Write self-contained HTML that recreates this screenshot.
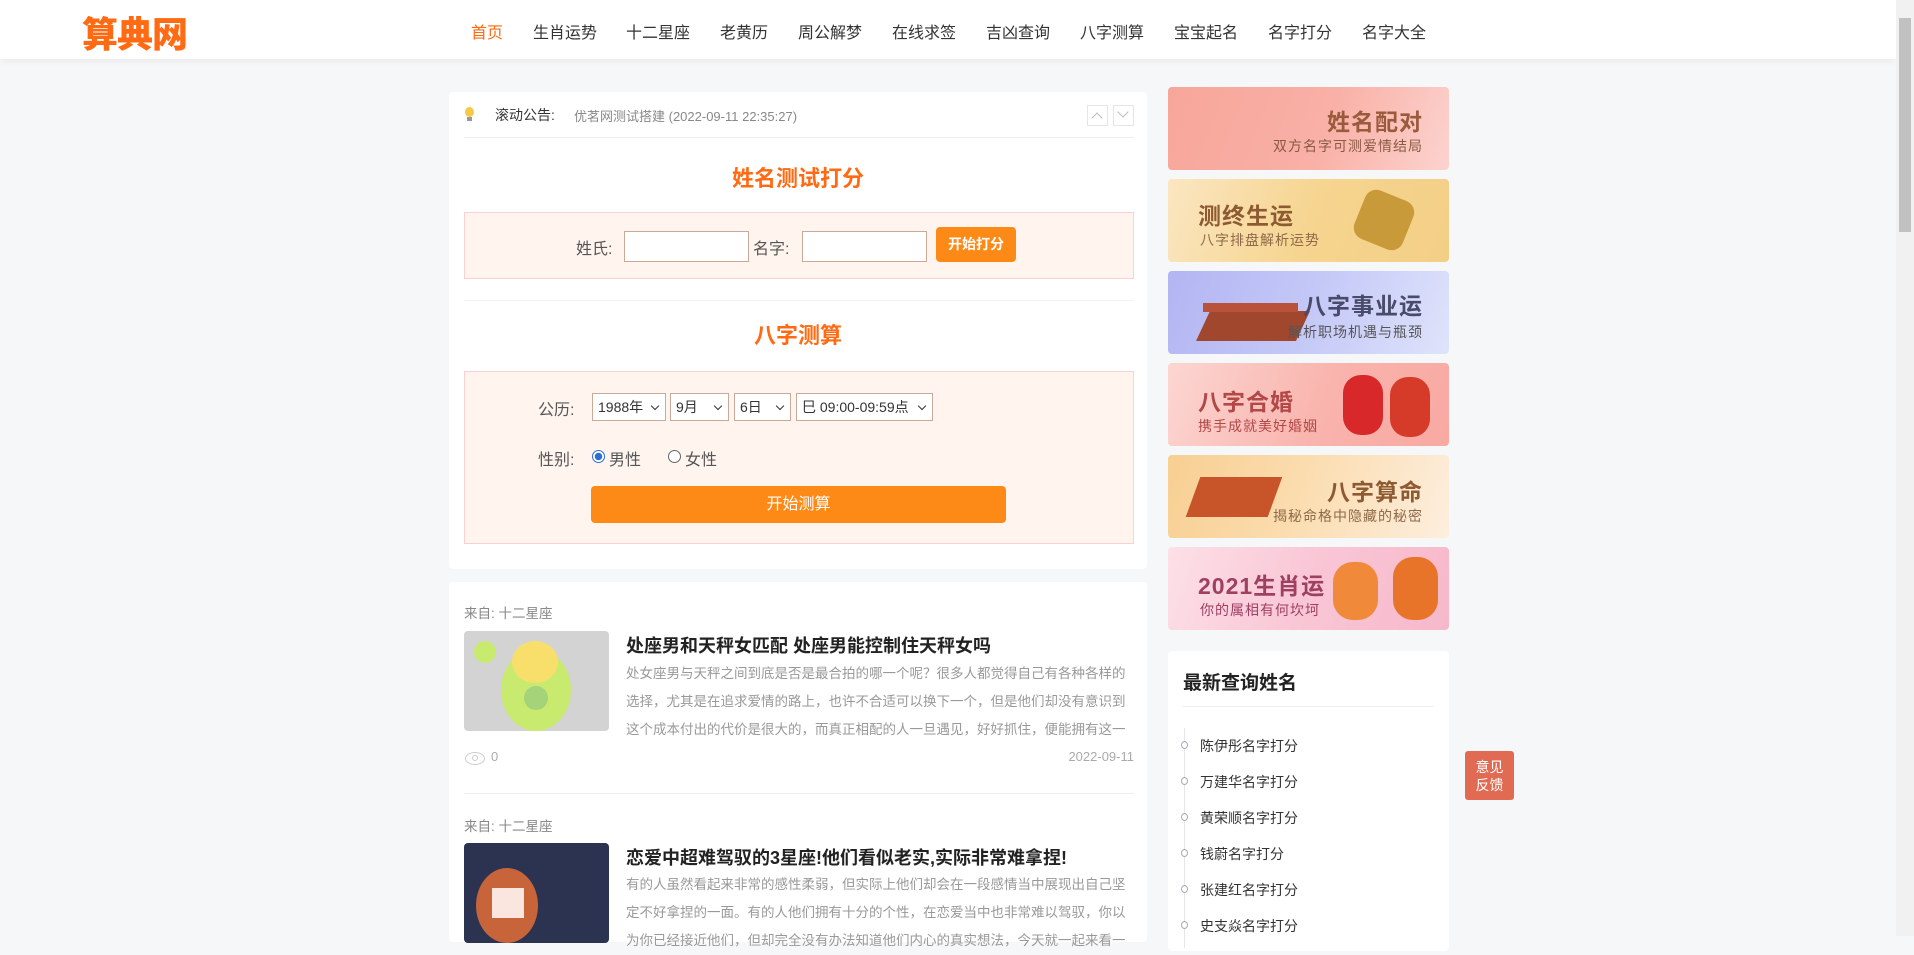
<!DOCTYPE html>
<html><head><meta charset="utf-8"><style>
*{margin:0;padding:0;box-sizing:border-box}
body{width:1914px;height:936px;overflow:hidden;background:#f6f7f9;font-family:"Liberation Sans","Noto Sans CJK SC",sans-serif;position:relative;color:#333}
.a{position:absolute}
.hdr{left:0;top:0;width:1896px;height:59px;background:#fff;box-shadow:0 2px 6px rgba(0,0,0,.06)}
.logo{left:82px;top:6px;font-size:36px;font-weight:900;color:#ff6a13;letter-spacing:-1px;font-family:"Noto Sans CJK SC",sans-serif}
.nav{top:19px;font-size:16px;color:#333;white-space:nowrap}
.card{background:#fff;border-radius:4px}
.t{white-space:nowrap}
.box{background:#fff4ee;border:1px solid #fbd0d0}
.inp{background:#fff;border:1px solid #c9a999;height:31px}
.sel{background:#fff;border:1px solid #c9a999;height:28px;font-size:14px;line-height:26px;padding-left:5px;color:#333;white-space:nowrap;overflow:hidden}
.sel:after{content:"";position:absolute;right:7px;top:9px;width:5px;height:5px;border-right:1.5px solid #333;border-bottom:1.5px solid #333;transform:rotate(45deg)}
.bn{left:1168px;width:281px;height:83px;border-radius:4px;overflow:hidden}
.bt{font-size:23px;font-weight:bold;letter-spacing:1px}
.bs{font-size:14px;letter-spacing:1px}
.li{left:1200px;font-size:14px;color:#333}
.dot{left:1181px;width:7px;height:8px;border:1px solid #aab;border-radius:50%;background:#fff}
.desc{font-size:13.5px;line-height:28px;color:#999;height:84px;overflow:hidden;width:508px}
</style></head><body>
<div class="a hdr"></div>
<div class="a logo">算典网</div>
<div class="a nav" style="left:471px;color:#ff6a13">首页</div>
<div class="a nav" style="left:533px">生肖运势</div>
<div class="a nav" style="left:626px">十二星座</div>
<div class="a nav" style="left:720px">老黄历</div>
<div class="a nav" style="left:798px">周公解梦</div>
<div class="a nav" style="left:892px">在线求签</div>
<div class="a nav" style="left:986px">吉凶查询</div>
<div class="a nav" style="left:1080px">八字测算</div>
<div class="a nav" style="left:1174px">宝宝起名</div>
<div class="a nav" style="left:1268px">名字打分</div>
<div class="a nav" style="left:1362px">名字大全</div>
<div class="a" style="left:1896px;top:0;width:18px;height:936px;background:#f1f1f1"></div>
<div class="a" style="left:1899px;top:18px;width:12px;height:214px;background:#c1c1c1"></div>

<div class="a card" style="left:449px;top:92px;width:698px;height:477px"></div>
<div class="a" style="left:465px;top:107px;width:9px;height:10px;border-radius:50%;background:#f7c948"></div>
<div class="a" style="left:467px;top:117px;width:5px;height:4px;background:#999"></div>
<div class="a t" style="left:495px;top:105px;font-size:14px;color:#333">滚动公告:</div>
<div class="a t" style="left:574px;top:106px;font-size:13px;color:#888">优茗网测试搭建 (2022-09-11 22:35:27)</div>
<div class="a" style="left:1087px;top:105px;width:21px;height:21px;border:1px solid #e5e5e5"></div>
<div class="a" style="left:1093px;top:114px;width:8px;height:8px;border-left:1px solid #bbb;border-top:1px solid #bbb;transform:rotate(45deg)"></div>
<div class="a" style="left:1113px;top:105px;width:21px;height:21px;border:1px solid #e5e5e5"></div>
<div class="a" style="left:1119px;top:108px;width:8px;height:8px;border-right:1px solid #bbb;border-bottom:1px solid #bbb;transform:rotate(45deg)"></div>
<div class="a" style="left:464px;top:137px;width:670px;height:1px;background:#eee"></div>
<div class="a t" style="left:449px;width:698px;text-align:center;top:161px;font-size:22px;font-weight:bold;color:#ff6a13">姓名测试打分</div>
<div class="a box" style="left:464px;top:212px;width:670px;height:67px"></div>
<div class="a t" style="left:576px;top:235px;font-size:16px;color:#555">姓氏:</div>
<div class="a inp" style="left:624px;top:231px;width:125px"></div>
<div class="a t" style="left:753px;top:235px;font-size:16px;color:#555">名字:</div>
<div class="a inp" style="left:802px;top:231px;width:125px"></div>
<div class="a t" style="left:936px;top:227px;width:80px;height:35px;background:#fd8a16;border-radius:4px;color:#fff;font-size:14px;font-weight:bold;text-align:center;line-height:35px">开始打分</div>
<div class="a" style="left:464px;top:300px;width:670px;height:1px;background:#f2f2f2"></div>
<div class="a t" style="left:449px;width:698px;text-align:center;top:318px;font-size:22px;font-weight:bold;color:#ff6a13">八字测算</div>
<div class="a box" style="left:464px;top:371px;width:670px;height:173px"></div>
<div class="a t" style="left:538px;top:396px;font-size:16px;color:#555">公历:</div>
<div class="a sel" style="left:592px;top:393px;width:74px">1988年</div>
<div class="a sel" style="left:670px;top:393px;width:59px">9月</div>
<div class="a sel" style="left:734px;top:393px;width:57px">6日</div>
<div class="a sel" style="left:796px;top:393px;width:137px">巳 09:00-09:59点</div>
<div class="a t" style="left:538px;top:446px;font-size:16px;color:#555">性别:</div>
<div class="a" style="left:592px;top:450px;width:13px;height:13px;border-radius:50%;border:1px solid #2b6fd6;background:radial-gradient(#2b6fd6 45%,#fff 50%)"></div>
<div class="a t" style="left:609px;top:446px;font-size:16px;color:#555">男性</div>
<div class="a" style="left:668px;top:450px;width:13px;height:13px;border-radius:50%;border:1px solid #666;background:#fff"></div>
<div class="a t" style="left:685px;top:446px;font-size:16px;color:#555">女性</div>
<div class="a t" style="left:591px;top:486px;width:415px;height:37px;background:#fd8a16;border-radius:4px;color:#fff;font-size:16px;text-align:center;line-height:37px">开始测算</div>

<div class="a card" style="left:449px;top:582px;width:698px;height:360px"></div>
<div class="a t" style="left:464px;top:602px;font-size:13.5px;color:#888">来自: 十二星座</div>
<div class="a" style="left:464px;top:631px;width:145px;height:100px;border-radius:4px;background:#d3d3d3;overflow:hidden"><div class="a" style="left:10px;top:10px;width:22px;height:22px;border-radius:50%;background:#c8ea6e"></div><div class="a" style="left:37px;top:18px;width:70px;height:82px;border-radius:50%;background:#c8ea6e"></div><div class="a" style="left:48px;top:10px;width:46px;height:42px;border-radius:50%;background:#f8df6c"></div><div class="a" style="left:60px;top:55px;width:24px;height:24px;border-radius:50%;background:#a5d37a"></div></div>
<div class="a t" style="left:626px;top:632px;font-size:18px;font-weight:bold;color:#222">处座男和天秤女匹配 处座男能控制住天秤女吗</div>
<div class="a desc" style="left:626px;top:660px">处女座男与天秤之间到底是否是最合拍的哪一个呢？很多人都觉得自己有各种各样的选择，尤其是在追求爱情的路上，也许不合适可以换下一个，但是他们却没有意识到这个成本付出的代价是很大的，而真正相配的人一旦遇见，好好抓住，便能拥有这一辈子的幸福。</div>
<div class="a" style="left:465px;top:752px;width:20px;height:13px;border:1px solid #ccc;border-radius:50%"></div>
<div class="a" style="left:472px;top:755px;width:6px;height:6px;border:1px solid #ccc;border-radius:50%"></div>
<div class="a t" style="left:491px;top:749px;font-size:13px;color:#aaa">0</div>
<div class="a t" style="left:1134px;transform:translateX(-100%);top:749px;font-size:13px;color:#aaa">2022-09-11</div>
<div class="a" style="left:464px;top:793px;width:670px;height:1px;background:#eee"></div>
<div class="a t" style="left:464px;top:815px;font-size:13.5px;color:#888">来自: 十二星座</div>
<div class="a" style="left:464px;top:843px;width:145px;height:100px;border-radius:4px;background:#2b3350;overflow:hidden"><div class="a" style="left:12px;top:25px;width:62px;height:75px;border-radius:50%;background:#c8643a"></div><div class="a" style="left:28px;top:45px;width:32px;height:30px;background:#fbe6df"></div></div>
<div class="a t" style="left:626px;top:844px;font-size:18px;font-weight:bold;color:#222">恋爱中超难驾驭的3星座!他们看似老实,实际非常难拿捏!</div>
<div class="a desc" style="left:626px;top:871px">有的人虽然看起来非常的感性柔弱，但实际上他们却会在一段感情当中展现出自己坚定不好拿捏的一面。有的人他们拥有十分的个性，在恋爱当中也非常难以驾驭，你以为你已经接近他们，但却完全没有办法知道他们内心的真实想法，今天就一起来看一下到底有哪些</div>

<div class="a bn" style="top:87px;background:linear-gradient(110deg,#f7a69a 0%,#f9b0a6 55%,#fcd3cf 100%)"><div class="a t bt" style="right:26px;top:16px;color:#9a5b3c">姓名配对</div><div class="a t bs" style="right:26px;top:49px;color:#8a5a44">双方名字可测爱情结局</div></div>
<div class="a bn" style="top:179px;background:linear-gradient(110deg,#fbe6c2 0%,#f6d590 50%,#f3cf86 100%)"><div class="a t bt" style="left:30px;top:18px;color:#8e5a32">测终生运</div><div class="a t bs" style="left:32px;top:51px;color:#8e6a48">八字排盘解析运势</div><div class="a" style="left:190px;top:15px;width:52px;height:52px;background:#c89a3a;border-radius:12px;transform:rotate(22deg)"></div></div>
<div class="a bn" style="top:271px;background:linear-gradient(110deg,#b3b5f3 0%,#c4c8f7 50%,#dfe3fb 100%)"><div class="a" style="left:35px;top:40px;width:100px;height:30px;background:#a0472e;transform:skewX(-25deg)"></div><div class="a" style="left:35px;top:32px;width:95px;height:9px;background:#b8523a"></div><div class="a t bt" style="right:26px;top:16px;color:#4a4a6a">八字事业运</div><div class="a t bs" style="right:26px;top:51px;color:#555">解析职场机遇与瓶颈</div></div>
<div class="a bn" style="top:363px;background:linear-gradient(110deg,#fcd6d2 0%,#f9b4ad 55%,#f8a9a2 100%)"><div class="a t bt" style="left:30px;top:20px;color:#b24848">八字合婚</div><div class="a t bs" style="left:30px;top:53px;color:#b24848">携手成就美好婚姻</div><div class="a" style="left:175px;top:12px;width:40px;height:60px;border-radius:18px;background:#d8282a"></div><div class="a" style="left:222px;top:14px;width:40px;height:60px;border-radius:18px;background:#d63b2a"></div></div>
<div class="a bn" style="top:455px;background:linear-gradient(110deg,#f7cf92 0%,#fbdcae 45%,#fdeede 100%)"><div class="a" style="left:25px;top:22px;width:82px;height:40px;background:#c8542a;transform:skewX(-20deg)"></div><div class="a t bt" style="right:26px;top:18px;color:#8e5a32">八字算命</div><div class="a t bs" style="right:26px;top:51px;color:#8e6a48">揭秘命格中隐藏的秘密</div></div>
<div class="a bn" style="top:547px;background:linear-gradient(110deg,#fde0e8 0%,#f9c6d6 50%,#f7b8cb 100%)"><div class="a t bt" style="left:30px;top:20px;color:#a04060">2021生肖运</div><div class="a t bs" style="left:32px;top:53px;color:#a04060">你的属相有何坎坷</div><div class="a" style="left:165px;top:15px;width:45px;height:58px;border-radius:20px;background:#f08a3a"></div><div class="a" style="left:225px;top:10px;width:45px;height:63px;border-radius:20px;background:#e8742a"></div></div>

<div class="a card" style="left:1168px;top:651px;width:281px;height:300px"></div>
<div class="a t" style="left:1183px;top:668px;font-size:19px;font-weight:bold;color:#222">最新查询姓名</div>
<div class="a" style="left:1183px;top:706px;width:250px;height:1px;background:#eee"></div>
<div class="a" style="left:1184px;top:728px;width:1px;height:220px;background:#e5e5ea"></div>
<div class="a dot" style="top:741px"></div><div class="a li t" style="top:736px">陈伊彤名字打分</div>
<div class="a dot" style="top:777px"></div><div class="a li t" style="top:772px">万建华名字打分</div>
<div class="a dot" style="top:813px"></div><div class="a li t" style="top:808px">黄荣顺名字打分</div>
<div class="a dot" style="top:849px"></div><div class="a li t" style="top:844px">钱蔚名字打分</div>
<div class="a dot" style="top:885px"></div><div class="a li t" style="top:880px">张建红名字打分</div>
<div class="a dot" style="top:921px"></div><div class="a li t" style="top:916px">史支焱名字打分</div>

<div class="a" style="left:1465px;top:751px;width:49px;height:49px;background:#e06b52;border-radius:3px;color:#fff;font-size:14px;line-height:18px;text-align:center;padding-top:7px">意见<br>反馈</div>
</body></html>
